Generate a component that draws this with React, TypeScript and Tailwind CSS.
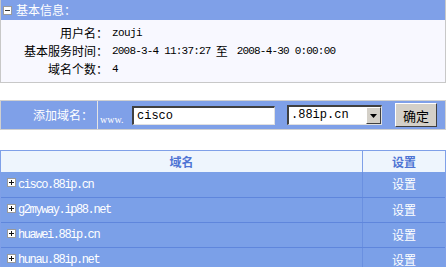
import React from 'react';

const domains = ['cisco.88ip.cn', 'g2myway.ip88.net', 'huawei.88ip.cn', 'hunau.88ip.net'];

const MinusBox = () => (
  <svg width="9" height="9" viewBox="0 0 9 9">
    <rect x="0.5" y="0.5" width="8" height="8" fill="#fff" stroke="#9a9a9a" />
    <path d="M2 4.5h5" stroke="#333" />
  </svg>
);

const PlusBox = () => (
  <svg width="9" height="9" viewBox="0 0 9 9">
    <rect x="0.5" y="0.5" width="8" height="8" fill="#fff" stroke="#9a9a9a" />
    <path d="M2 4.5h5M4.5 2v5" stroke="#111" />
  </svg>
);

const App: React.FC = () => {
  return (
    <div className="w-[448px] h-[267px] overflow-hidden bg-white text-[12px] text-black font-['Noto_Sans_CJK_SC',sans-serif]">
      {/* basic info */}
      <div className="w-[446px] border-x border-b border-[#c8c8c8]">
        <div className="h-5 bg-[#7fa0e8] flex items-center pl-[2px] text-white">
          <MinusBox />
          <span className="ml-[4px] leading-5">基本信息：</span>
        </div>
        <div className="bg-[#f8f8ff] h-[62px] pt-[4px]">
          <div className="flex h-[18px] leading-[18px]">
            <div className="w-[107px] text-right">用户名：</div>
            <div className="pl-1 font-['Liberation_Mono','Noto_Sans_CJK_SC',monospace] text-[11px] tracking-[-0.6px]">zouji</div>
          </div>
          <div className="flex h-[18px] leading-[18px]">
            <div className="w-[107px] text-right">基本服务时间：</div>
            <div className="pl-1 flex font-['Liberation_Mono','Noto_Sans_CJK_SC',monospace] text-[11px] tracking-[-0.8px]">
              <span>2008-3-4 11:37:27</span>
              <span className="ml-[5px] mr-[9px] text-[12px] tracking-normal font-['Noto_Sans_CJK_SC',sans-serif]">至</span>
              <span>2008-4-30 0:00:00</span>
            </div>
          </div>
          <div className="flex h-[18px] leading-[18px]">
            <div className="w-[107px] text-right">域名个数：</div>
            <div className="pl-1 font-['Liberation_Mono',monospace] text-[11px]">4</div>
          </div>
        </div>
      </div>

      {/* add domain */}
      <div className="mt-[17px] w-[446px] h-[30px] border border-[#d0d0d0] bg-[#e4e4e4] flex gap-px">
        <div className="w-[96px] bg-[#7fa0e8] text-white text-right pr-[4px] leading-[28px]">添加域名：</div>
        <div className="flex-1 bg-[#7fa0e8] flex items-center">
          <span className="w-[34px] self-end pb-[4px] pl-[2px] text-[10px] leading-none text-white font-['Liberation_Serif',serif]">www.</span>
          <div className="w-[143px] h-[19px] bg-white border-t-2 border-l-2 border-t-[#404040] border-l-[#404040] border-r border-b border-r-[#e0e0e0] border-b-[#e0e0e0] pl-[3px] leading-[16px] text-[12px] font-['Liberation_Mono',monospace]">
            cisco
          </div>
          <div className="ml-[12px] w-[95px] h-[20px] bg-white border-t-2 border-l-2 border-t-[#404040] border-l-[#404040] border-r border-b border-r-[#e0e0e0] border-b-[#e0e0e0] flex">
            <span className="flex-1 pl-[2px] leading-[17px] text-[12px] font-['Liberation_Mono',monospace]">.88ip.cn</span>
            <div className="w-[15px] h-[17px] bg-[#d4d0c8] border border-t-white border-l-white border-r-[#404040] border-b-[#404040] flex items-center justify-center">
              <svg width="7" height="4" viewBox="0 0 7 4">
                <path d="M0 0h7L3.5 4z" fill="#000" />
              </svg>
            </div>
          </div>
          <div className="ml-[13px] w-[42px] h-[24px] bg-[#d4d0c8] border border-t-white border-l-white border-r-[#404040] border-b-[#404040] flex items-center justify-center text-[13px] leading-none">
            确定
          </div>
        </div>
      </div>

      {/* domain list */}
      <div className="mt-[20px] w-[446px] border border-[#7fa0e8]">
        <div className="grid grid-cols-[362px_1fr] h-[21px] bg-[#eef5fd] text-[#4e74d4] font-bold leading-[21px]">
          <div className="text-center border-r border-[#7fa0e8]">域名</div>
          <div className="text-center">设置</div>
        </div>
        {domains.map((d, i) => (
          <div
            key={d}
            className={`grid grid-cols-[362px_1fr] h-[25px] bg-[#7ba0e8] text-white ${i > 0 ? 'border-t border-[#5f86dc]' : ''}`}
          >
            <div className="flex items-center pl-[6px] border-r border-[#6a90e0]">
              <span className="-mt-[4px]">
                <PlusBox />
              </span>
              <span className="ml-[2px] font-['Liberation_Mono',monospace] text-[12px] tracking-[-1.4px]">{d}</span>
            </div>
            <div className="text-center leading-[24px]">设置</div>
          </div>
        ))}
      </div>
    </div>
  );
};

export default App;
